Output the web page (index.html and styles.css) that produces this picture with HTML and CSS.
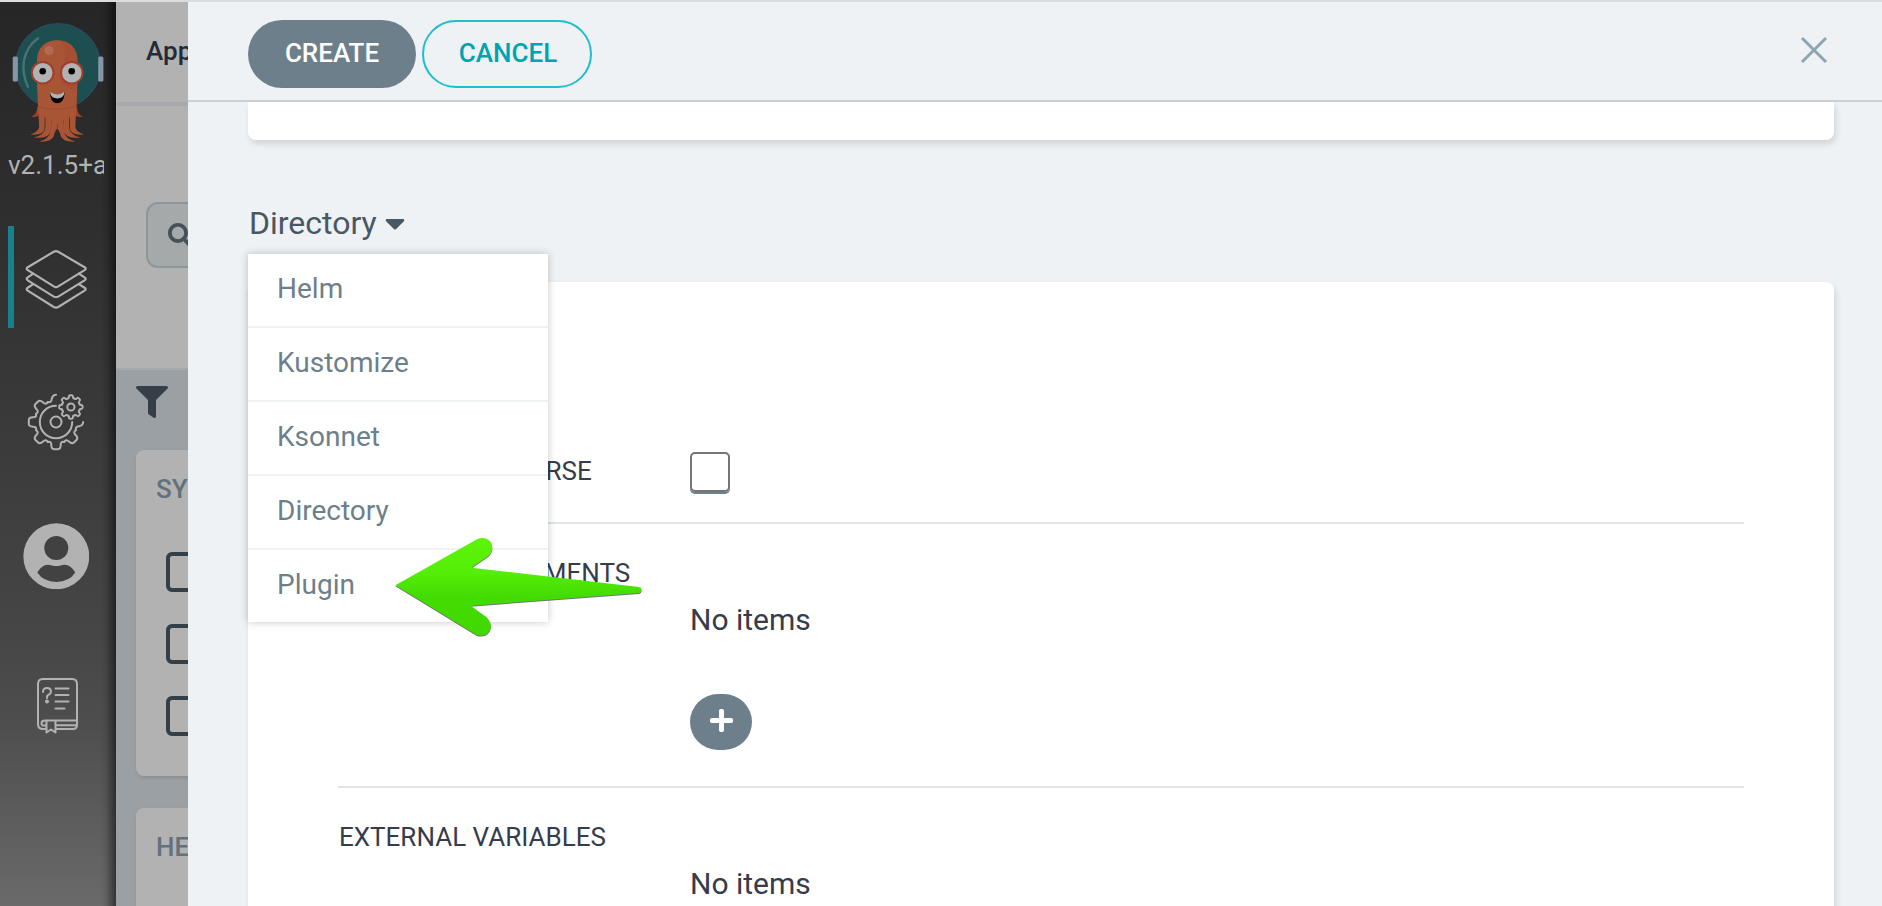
FILE: index.html
```
<!DOCTYPE html>
<html lang="en">
<head>
<meta charset="utf-8">
<title>Create application</title>
<link rel="stylesheet" href="styles.css">
</head>
<body>
<div class="app">
  <nav class="sidebar">
    <svg class="logo" viewBox="0 20 116 126">
      <circle cx="58" cy="66" r="42.3" fill="#1d4e50" stroke="#2b4b5a" stroke-width="1.6"/>
      <path d="M38 38.3C22 50 20 70 28 86.7" fill="none" stroke="#4a7173" stroke-width="2.4" stroke-linecap="round"/>
      <rect x="12.7" y="56.5" width="5.2" height="25" rx="1.5" fill="#8496a8"/>
      <rect x="98.2" y="56.5" width="5.2" height="25" rx="1.5" fill="#8496a8"/>
      <path d="M37.500 106Q37 115 31.500 116.500Q37 118.500 41 114zM77 106Q77 115 82.500 116.500Q77 118.500 73 114z" fill="#a04030"/>
      <path d="M37 61C37 47 46 40.300 57.200 40.300S77.400 47 77.400 61V84L76.300 113L57.200 124L38.300 113L37 84z" fill="#a85535"/>
      <path fill="#a85535" d="M38.300 110H45L44.500 129Q43.500 135.500 30.500 134.500Q38.500 132 39.200 127zM45.500 110H51.500L50.800 131Q49 139 34 137.600Q44.500 135 45.300 128zM52 110H57.400V128Q54 133 53.800 136Q51.500 142.300 39.300 141.600Q49 139 50.800 131zM76.200 110H69.500L70 129Q71 135.500 84 134.500Q76 132 75.300 127zM69 110H63L63.700 131Q65.500 139 80.500 137.600Q70 135 69.200 128zM62.500 110H57V128Q60.500 133 60.700 136Q63 142.300 75.200 141.600Q65.500 139 63.700 131z"/>
      <path d="M60 41C67 47 67 60 60.500 72V84L76.500 92L77.400 61C77.400 48 70 41 60 41z" fill="#a34c31" opacity=".55"/>
      <path d="M38.500 106.500Q57 112 76.500 106.500" fill="none" stroke="#a04a31"/>
      <circle cx="49" cy="50.500" r="4.700" fill="#b16b53"/>
      <circle cx="42.700" cy="72.700" r="11.800" fill="#a23d2e"/><circle cx="71.800" cy="72.700" r="11.800" fill="#a23d2e"/>
      <circle cx="42.700" cy="72.700" r="9.800" fill="#b2b2b2"/><circle cx="71.800" cy="72.700" r="9.800" fill="#b2b2b2"/>
      <circle cx="42.700" cy="71.300" r="3.300"/><circle cx="71.700" cy="71.300" r="3.300"/>
      <path d="M50 91.600Q57.300 97 64.600 91.600C64.500 99 62 103.300 57.300 103.300S50.100 99 50 91.600z"/>
      <path d="M50 91.600Q57.300 97 64.600 91.600Q64 98.500 57.300 98.500T50 91.600z" fill="#b2b2b2"/>
    </svg>
    <div class="version">v2.1.5+a</div>
    <div class="nav-item active">
      <svg viewBox="0 0 64 62" class="layers line">
        <path d="M34.300 1.800L61.500 17.800Q64 19.300 61.500 20.800L34.300 37.600Q32 39 29.700 37.600L2.800 20.800Q.500 19.300 2.800 17.800L29.700 1.800Q32 .500 34.300 1.800z"/>
        <path d="M8.500 24.500L2.800 28.300Q.500 29.800 2.800 31.300L29.700 48.200Q32 49.500 34.300 48.200L61.500 31.300Q64 29.800 61.500 28.300L55.500 24.500"/>
        <path d="M8.500 35.200L2.800 39Q.500 40.500 2.800 42L29.700 58.900Q32 60.200 34.300 58.900L61.500 42Q64 40.500 61.500 39L55.500 35.200"/>
      </svg>
    </div>
    <div class="nav-item">
      <svg viewBox="-32 -30 64 60" class="gears line">
        <defs>
          <path id="tooth" d="M-8.200-19.900Q-4.600-19.100-4.700-23Q-4.600-27.200-1.800-27.200H1.800Q4.600-27.200 4.700-23Q4.600-19.100 8.200-19.900"/>
        </defs>
        <circle r="5.500"/>
        <path d="M0-16.200A16.200 16.200 0 1 0 16.200 0"/>
        <use href="#tooth" transform="rotate(135)"/><use href="#tooth" transform="rotate(180)"/><use href="#tooth" transform="rotate(225)"/><use href="#tooth" transform="rotate(270)"/><use href="#tooth" transform="rotate(315)"/>
        <path d="M-8.200-19.900Q-4.600-19.100-4.300-23Q-3.500-27 0-27.200M27.200 0Q27 3.500 23 4.300Q19.100 4.600 19.900 8.200"/>
        <circle cx="14.900" cy="-15" r="3.600"/>
        <g transform="translate(14.900 -15) scale(.43)" stroke-width="4.400">
          <use href="#tooth"/><use href="#tooth" transform="rotate(45)"/><use href="#tooth" transform="rotate(90)"/><use href="#tooth" transform="rotate(135)"/><use href="#tooth" transform="rotate(180)"/><use href="#tooth" transform="rotate(225)"/><use href="#tooth" transform="rotate(270)"/><use href="#tooth" transform="rotate(315)"/>
        </g>
      </svg>
    </div>
    <div class="nav-item">
      <svg viewBox="0 0 200 200" class="user">
        <path fill-rule="evenodd" fill="#b2b2b2" d="M100 1A99 99 0 1 1 100 199A99 99 0 1 1 100 1zM100 39A36 36 0 1 0 100 111A36 36 0 1 0 100 39zM43 149Q61 177 100 177T157 149Q139 118 113 128Q100 131 87 128Q61 118 43 149z"/>
      </svg>
    </div>
    <div class="nav-item">
      <svg viewBox="0 0 42 58" class="book line">
        <path d="M10 51H7Q2 51 2 46V6Q2 1 7 1H36Q41 1 41 6V47Q41 51 37 51H20M41 42.500H9Q5.500 42.500 5.500 45.200T9 47.500H10M20 47.300H41M10.500 43V54.500L15 51.500L19.500 54.500V43"/>
        <path d="M19.500 10.500H32.500M19.500 17H32.500M19.500 23.600H32.500M19.500 30.400H28.500"/>
        <path d="M7 14Q7.200 10 11 10T15 13.500Q15 15.500 12.800 16.600T11 20"/>
        <circle cx="11" cy="23.500" r="1"/>
      </svg>
    </div>
  </nav>
  <main class="page">
    <header class="page-title">Applications</header>
    <section class="toolbar">
      <div class="search"><svg viewBox="0 0 512 512"><path d="M505 442.700L405.300 343c-4.500-4.500-10.600-7-17-7H372c27.600-35.300 44-79.700 44-128C416 93.100 322.900 0 208 0S0 93.100 0 208s93.100 208 208 208c48.300 0 92.700-16.400 128-44v16.300c0 6.400 2.500 12.500 7 17l99.700 99.700c9.400 9.400 24.600 9.400 33.900 0l28.300-28.300c9.400-9.400 9.400-24.600.1-34zM208 336c-70.700 0-128-57.200-128-128 0-70.700 57.200-128 128-128 70.700 0 128 57.200 128 128 0 70.700-57.200 128-128 128z"/></svg></div>
    </section>
    <section class="filters">
      <svg class="funnel" viewBox="0 0 512 512"><path d="M487.976 0H24.028C2.710 0-8.047 25.866 7.058 40.971L192 225.941V432c0 7.831 3.821 15.170 10.237 19.662l80 55.980C298.020 518.690 320 507.493 320 487.980V225.941l184.947-184.970C520.021 25.896 509.338 0 487.976 0z"/></svg>
      <div class="filter-card sync">
        <div class="filter-title">SYNC</div>
        <div class="tick"></div><div class="tick"></div><div class="tick"></div>
      </div>
      <div class="filter-card health"><div class="filter-title">HEALTH</div></div>
    </section>
  </main>
  <aside class="panel">
    <header class="panel-head">
      <button class="btn solid">CREATE</button>
      <button class="btn outline">CANCEL</button>
      <svg class="close" viewBox="0 0 28 28"><path d="M2 2L26 26M26 2L2 26"/></svg>
    </header>
    <div class="panel-body">
      <div class="card upper"></div>
      <div class="type-select">
        <span>Directory</span>
        <svg viewBox="0 0 320 512"><path d="M31.300 192h257.300c17.800 0 26.700 21.500 14.100 34.100L174.100 354.700c-7.800 7.800-20.500 7.800-28.300 0L17.200 226.100C4.600 213.500 13.500 192 31.300 192z"/></svg>
        <ul class="menu">
          <li>Helm</li><li>Kustomize</li><li>Ksonnet</li><li>Directory</li><li>Plugin</li>
        </ul>
      </div>
      <div class="card params">
        <div class="row first">
          <div class="label">DIRECTORY RECURSE</div>
          <div class="value"><div class="checkbox"></div></div>
        </div>
        <div class="row">
          <div class="label">TOP-LEVEL ARGUMENTS</div>
          <div class="value"><div class="empty">No items</div>
            <button class="add"><svg viewBox="0 32 448 448"><path d="M416 208H272V64c0-17.670-14.330-32-32-32h-32c-17.670 0-32 14.330-32 32v144H32c-17.670 0-32 14.330-32 32v32c0 17.670 14.330 32 32 32h144v144c0 17.670 14.330 32 32 32h32c17.670 0 32-14.330 32-32V304h144c17.670 0 32-14.330 32-32v-32c0-17.670-14.330-32-32-32z"/></svg></button>
          </div>
        </div>
        <div class="row">
          <div class="label">EXTERNAL VARIABLES</div>
          <div class="value"><div class="empty">No items</div></div>
        </div>
      </div>
    </div>
  </aside>
  <svg class="pointer" viewBox="460 880 760 320">
    <defs><linearGradient id="green" x1="0" y1="0" x2="0" y2="1"><stop offset="0" stop-color="#5bf507"/><stop offset=".35" stop-color="#55ee06"/><stop offset=".6" stop-color="#43dc02"/><stop offset="1" stop-color="#41d900"/></linearGradient></defs>
    <path fill="url(#green)" d="M467 1037L712 899Q735 889 751 904Q767 927 747 948L695 984L1198 1042Q1206 1044 1206 1051T1198 1060L693 1098L741 1133Q760 1153 750 1174Q735 1194 710 1185z"/>
  </svg>
</div>
</body>
</html>
```
FILE: styles.css
```
* { box-sizing: border-box; }
body {
  margin: 0;
  font-family: Roboto, "Liberation Sans", sans-serif;
  background: #eef2f5;
}
.app {
  position: relative;
  display: grid;
  grid-template-columns: 116px 72px 1fr;
  width: 1882px;
  height: 906px;
  overflow: hidden;
  border-top: 2px solid #dadcdd;
}
.line { fill: none; stroke: #b2b2b2; stroke-width: 2; stroke-linecap: round; stroke-linejoin: round; }

.sidebar {
  display: flex;
  flex-direction: column;
  padding-top: 18px;
  height: 904px;
  background:
    linear-gradient(90deg, transparent 100px, rgba(0, 0, 0, .08) 106px, rgba(0, 0, 0, .5) 116px),
    linear-gradient(#262626, #2f2f2f 25%, #3d3d3d 53%, #464646 70%, #4e4e4e 80%, #6a6a6a 100%);
}
.logo { display: block; width: 116px; height: 126px; }
.version {
  width: 96px;
  margin: 3px 0 0 8px;
  overflow: hidden;
  white-space: nowrap;
  font-size: 26px;
  line-height: 32px;
  color: #b2b2b2;
}
.nav-item {
  display: flex;
  align-items: center;
  width: 112px;
  height: 102px;
  margin-bottom: 39px;
  padding-left: 8px;
  flex: none;
}
.nav-item.active { margin-top: 45px; }
.nav-item.active::before { content: ""; width: 6px; height: 102px; background: #17828e; }
.layers { width: 62px; height: 60px; margin: 6px 0 0 11px; stroke-width: 2.200; }
.gears { width: 64px; height: 60px; margin: 8px 0 0 16px; }
.user { width: 66.600px; height: 66.600px; margin: -6px 0 0 14.700px; }
.book { width: 42px; height: 58px; margin: 14px 0 0 27.500px; }

.page { display: flex; flex-direction: column; overflow: hidden; background: #b2b2b2; }
.page-title {
  height: 104px;
  flex: none;
  padding: 33px 0 0 30px;
  border-bottom: 4px solid #a6a8ab;
  font-size: 26px;
  line-height: 32px;
  font-weight: 500;
  color: #252a38;
}
.toolbar { height: 262px; flex: none; padding: 96px 0 0 30px; }
.search {
  width: 300px;
  height: 66px;
  padding: 18.500px 0 0 20px;
  border: 2px solid #8b969d;
  border-radius: 12px;
  background: #a5a9aa;
}
.search svg { display: block; width: 24.600px; height: 24.600px; fill: #455159; }
.filters { flex: 1; padding: 16px 0 0 20px; border-top: 2px solid #a5aaad; background: #9aa0a4; }
.funnel { display: block; width: 32px; height: 32px; fill: #363f48; }
.filter-card {
  width: 300px;
  margin-top: 32px;
  padding: 22px 0 0 20px;
  border-radius: 8px;
  background: #b2b2b2;
  box-shadow: 1px 2px 4px rgba(0, 0, 0, .12);
}
.filter-card.sync { height: 326px; }
.filter-card.health { height: 326px; }
.filter-title { margin-bottom: 46px; font-size: 26px; line-height: 34px; font-weight: 500; color: #62717b; }
.tick { width: 40px; height: 40px; margin: 0 0 32px 10px; border: 4px solid #343f48; border-radius: 6px; }

.panel { display: flex; flex-direction: column; overflow: hidden; background: #eef2f5; }
.panel-head {
  display: flex;
  align-items: flex-start;
  gap: 6px;
  height: 100px;
  flex: none;
  padding: 18px 54px 0 60px;
  border-bottom: 2px solid #c9d1d5;
}
.btn {
  height: 68px;
  padding: 0 0 2px;
  border: 0;
  border-radius: 34px;
  font: 500 26px Roboto, sans-serif;
}
.btn.solid { width: 168px; background: #6d7f8b; color: #fff; }
.btn.outline { width: 170px; padding-left: 2px; border: 2px solid #1fbdd0; background: transparent; color: #00a2b3; }
.close { width: 28px; height: 28px; margin: 16px 0 0 auto; fill: none; stroke: #8fa4b1; stroke-width: 3; }
.panel-body { flex: 1; padding: 0 48px 0 60px; }
.card { border-radius: 8px; background: #fff; box-shadow: 2px 4px 6px rgba(0, 0, 0, .12); }
.card.upper { height: 38px; border-radius: 0 0 8px 8px; }
.type-select {
  position: relative;
  display: flex;
  align-items: center;
  height: 142px;
  padding: 24px 0 0 1px;
  font-size: 32px;
  color: #495763;
}
.type-select svg { width: 20px; height: 32px; margin-left: 8px; fill: #495763; }
.menu {
  position: absolute;
  top: 114px;
  left: 0;
  width: 300px;
  margin: 0;
  padding: 0;
  list-style: none;
  background: #fff;
  box-shadow: 0 0 8px rgba(0, 0, 0, .22);
  font-size: 28px;
  line-height: 69px;
  color: #6d7f8b;
}
.menu li { height: 72px; padding-left: 29px; }
.menu li + li { height: 74px; border-top: 2px solid #eef2f5; }
.card.params { height: 700px; padding: 0 90px; color: #363c4a; }
.row { display: flex; height: 264px; border-bottom: 2px solid #dee4e9; }
.row.first { height: 242px; padding-top: 138px; }
.label { width: 352px; padding: 33px 0 0 1px; font-size: 26px; line-height: 32px; }
.row.first .label { padding-top: 35px; }
.checkbox { width: 40px; height: 40px; margin-top: 32px; border: 2px solid #757575; border-radius: 5px; box-shadow: 0 2px 0 #6d7f8b; }
.empty { padding-top: 78px; font-size: 30px; line-height: 36px; }
.add {
  display: flex;
  justify-content: center;
  width: 62px;
  height: 56px;
  margin-top: 56px;
  padding: 15px 0 0 1px;
  border: 0;
  border-radius: 28px;
  background: #6d7f8b;
}
.add svg { width: 23px; height: 23px; fill: #fff; }
.pointer {
  position: absolute;
  top: 531.300px;
  left: 393.300px;
  width: 253.300px;
  height: 106.700px;
  filter: drop-shadow(0 1px .5px rgba(0, 0, 0, .55));
}
```
